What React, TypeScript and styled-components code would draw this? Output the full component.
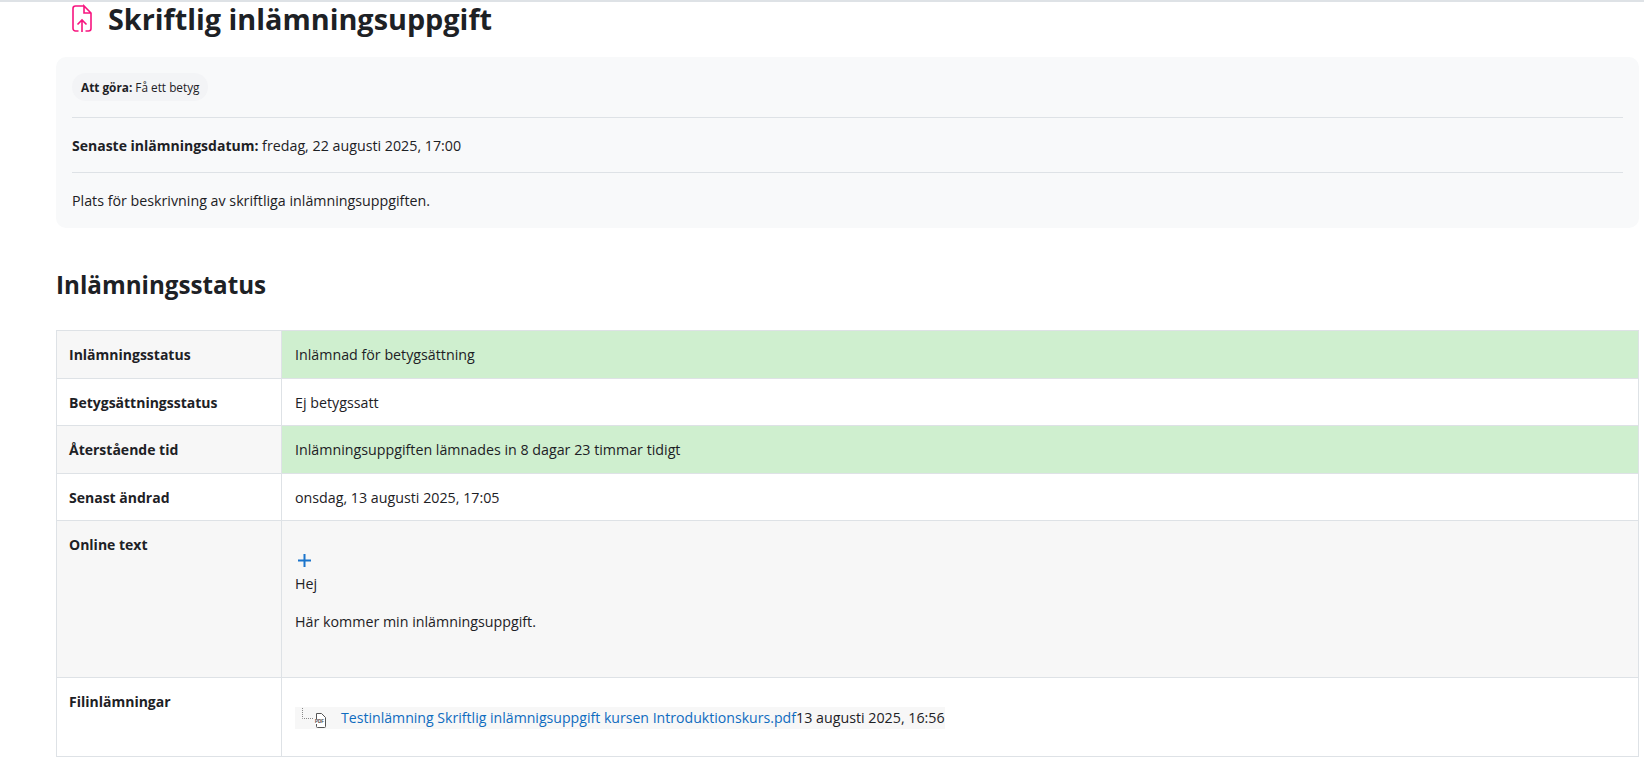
import styled, { createGlobalStyle } from "styled-components";

const GlobalStyle = createGlobalStyle`
    html, body {
        margin: 0;
        padding: 0;
        height: 100%;
        overflow: hidden;
        background-color: #ffffff;
    }
    body {
        font-family: "Open Sans", "Noto Sans", sans-serif;
        color: #1d2125;
    }
    b {
        font-size: 14px;
    }
`;

const Page = styled.div`
    height: 755px;
    overflow: hidden;
    border-top: 2px solid #dee2e6;
    padding: 0 5px 0 56px;
`;

const HeaderRow = styled.div`
    height: 55px;
    display: flex;
    align-items: flex-start;
    padding-left: 16px;
    gap: 16px;
`;

const Title = styled.h1`
    margin: -2px 0 0;
    font-size: 28.8px;
    line-height: 38px;
    font-weight: 700;
`;

const Panel = styled.div`
    background-color: #f8f9fa;
    border-radius: 10px;
    padding: 16px 16px 18px;
    font-size: 14.25px;
`;

const Badge = styled.div`
    display: inline-block;
    vertical-align: top;
    background-color: #f3f4f6;
    border-radius: 14px;
    padding: 0 8px 0 9px;
    font-size: 11.8px;
    line-height: 28px;

    b {
        font-size: 11.8px;
    }
`;

const PanelSection = styled.div`
    border-top: 1px solid #dee2e6;
    margin-top: 16px;
    padding-top: 19px;
    line-height: 18.5px;
`;

const Heading = styled.h2`
    margin: 0;
    padding: 39px 0 27px;
    font-size: 24.2px;
    line-height: 36px;
    font-weight: 700;
`;

const Table = styled.div`
    display: grid;
    grid-template-columns: 225px 1fr;
    border-top: 1px solid #dee2e6;
    border-left: 1px solid #dee2e6;
    font-size: 14.25px;
    line-height: 22.5px;
`;

const Label = styled.div<{ $shade: boolean }>`
    font-weight: 700;
    font-size: 14px;
    padding: 13px 12px 11px;
    border-right: 1px solid #dee2e6;
    border-bottom: 1px solid #dee2e6;
    background-color: ${(p) => (p.$shade ? "#f7f7f7" : "#ffffff")};
`;

const Value = styled.div<{ $bg: string }>`
    padding: 13px 13px 11px;
    border-right: 1px solid #dee2e6;
    border-bottom: 1px solid #dee2e6;
    background-color: ${(p) => p.$bg};
`;

const OnlineText = styled.div`
    padding-bottom: 16.5px;
`;

const ExpandIcon = styled.svg`
    display: block;
    margin: 20px 0 6px 3px;
`;

const Para = styled.p`
    margin: 0 0 15.5px;
`;

const FileRow = styled.div`
    margin: 16px 0;
    display: inline-flex;
    align-items: center;
    background-color: #f7f7f7;
`;

const FileTree = styled.svg`
    display: block;
    flex: none;
`;

const FileLink = styled.a`
    color: #0f6cbf;
    font-size: 14.12px;
    text-decoration: none;
`;

function App(): JSX.Element {
    return (
        <Page>
            <GlobalStyle />
            <HeaderRow>
                <svg width="20" height="30" viewBox="0 0 20 30" fill="none" stroke="#f7157f" strokeWidth="1.6">
                    <path d="M12 4H3.500A2.500 2.500 0 0 0 1 6.500v20A2.500 2.500 0 0 0 3.500 29h3M13.500 29h3a2.500 2.500 0 0 0 2.500-2.500V11l-7-7v7h7" />
                    <path d="M10 30V18M5.500 22.500L10 18l4.500 4.500" />
                </svg>
                <Title>Skriftlig inlämningsuppgift</Title>
            </HeaderRow>
            <Panel>
                <Badge><b>Att göra:</b> Få ett betyg</Badge>
                <PanelSection><b>Senaste inlämningsdatum:</b> fredag, 22 augusti 2025, 17:00</PanelSection>
                <PanelSection>Plats för beskrivning av skriftliga inlämningsuppgiften.</PanelSection>
            </Panel>
            <Heading>Inlämningsstatus</Heading>
            <Table>
                <Label $shade>Inlämningsstatus</Label>
                <Value $bg="#cfefcf">Inlämnad för betygsättning</Value>
                <Label $shade={false}>Betygsättningsstatus</Label>
                <Value $bg="#ffffff">Ej betygssatt</Value>
                <Label $shade>Återstående tid</Label>
                <Value $bg="#cfefcf">Inlämningsuppgiften lämnades in 8 dagar 23 timmar tidigt</Value>
                <Label $shade={false}>Senast ändrad</Label>
                <Value $bg="#ffffff">onsdag, 13 augusti 2025, 17:05</Value>
                <Label $shade>Online text</Label>
                <Value $bg="#f7f7f7">
                    <OnlineText>
                        <ExpandIcon width="13" height="13" viewBox="0 0 13 13" stroke="#1b75cc" strokeWidth="2">
                            <path d="M6.500 0v13M0 6.500h13" />
                        </ExpandIcon>
                        <Para>Hej</Para>
                        <Para>Här kommer min inlämningsuppgift.</Para>
                    </OnlineText>
                </Value>
                <Label $shade={false}>Filinlämningar</Label>
                <Value $bg="#ffffff">
                    <FileRow>
                        <FileTree width="46" height="22" viewBox="0 0 46 22" fill="none">
                            <path d="M7.500 1v10.500H19" stroke="#888" strokeDasharray="1 1" />
                            <path d="M21.500 6.500h5l4 4v9a1 1 0 0 1-1 1h-7a1 1 0 0 1-1-1z" stroke="#555" fill="#fff" />
                            <rect x="20" y="12" width="9" height="5" fill="#fff" />
                            <text x="24.500" y="16" fontSize="4.500" fontWeight="700" fill="#444" textAnchor="middle" fontFamily="Liberation Sans, sans-serif">PDF</text>
                        </FileTree>
                        <FileLink>Testinlämning Skriftlig inlämnigsuppgift kursen Introduktionskurs.pdf</FileLink>
                        <span>13 augusti 2025, 16:56</span>
                    </FileRow>
                </Value>
            </Table>
        </Page>
    );
}

export default App;
